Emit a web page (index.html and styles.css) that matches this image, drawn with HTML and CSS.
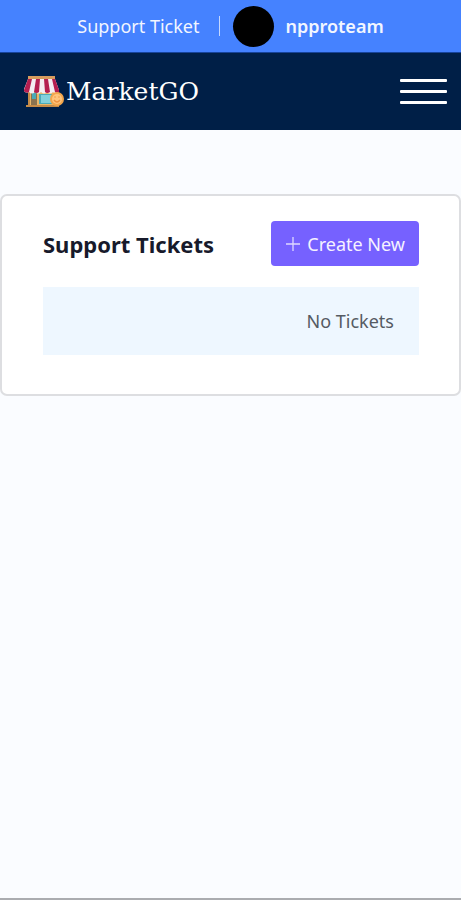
FILE: index.html
```html
<!DOCTYPE html>
<html lang="en">
<head>
<meta charset="utf-8">
<meta name="viewport" content="width=device-width, initial-scale=1">
<title>Support Tickets - MarketGO</title>
<link rel="stylesheet" href="styles.css">
</head>
<body>
<div class="topbar">
  <a class="topbar-link" href="#">Support Ticket</a>
  <span class="divider"></span>
  <a class="user" href="#"><span class="avatar"></span>npproteam</a>
</div>
<header class="navbar">
  <a class="brand" href="#">
    <svg class="brand-icon" viewBox="0 0 42 34" aria-hidden="true">
      <path fill="#e9b76c" d="M5 14h29v17H5z"/>
      <path fill="#c58b48" d="M3 30h33v2H3zM5 15h2v15H5z"/>
      <path fill="#8a7350" d="M8 17h6v13H8z"/>
      <path fill="#4baab8" d="M9 18h4v6H9zM16 19h13v10H16z"/>
      <path fill="#82d0dc" d="M18 20h10v8H18z"/>
      <path fill="#d79c5e" d="M5 1h27v3H5z"/>
      <path fill="#f4eef2" d="M5 4h27l4 11v2q-3 3-6 0-3 3-6 0-3 3-6 0-3 3-6 0-3 3-6 0-3 2-5-1v-2z"/>
      <path fill="#b51f50" d="M5 4h4L6 17q-3 2-5-1v-1zM13 4h4l-1 13q-2 2-5 0zM21 4h4l2 13q-3 2-5 0zM29 4h3l4 11v2q-2 2-4 0z"/>
      <circle cx="34" cy="24" r="7" fill="#f3a64c"/>
      <circle cx="34" cy="24" r="5" fill="#ffc57d"/>
      <path fill="none" stroke="#ed9240" stroke-width="1.3" d="M31 25q3 4 6 0M31.500 22h1M35.500 22h1"/>
    </svg>
    <span>MarketGO</span>
  </a>
  <button class="menu" type="button" aria-label="Menu"><span></span><span></span><span></span></button>
</header>
<main class="page">
  <section class="card">
    <div class="card-head">
      <h1>Support Tickets</h1>
      <button class="create" type="button">
        <svg class="plus" viewBox="0 0 14 14" aria-hidden="true"><path d="M7 0v14M0 7h14"/></svg>
        Create New
      </button>
    </div>
    <p class="empty">No Tickets</p>
  </section>
</main>
</body>
</html>
```

FILE: styles.css
```css
* {
  box-sizing: border-box;
}

body {
  display: flex;
  flex-direction: column;
  min-height: 100vh;
  margin: 0;
  border-bottom: 2px solid #aaacb0;
  background: #fafcff;
  font-family: "Noto Sans", sans-serif;
  font-size: 18px;
  line-height: 24px;
}

a {
  color: inherit;
  text-decoration: none;
}

button {
  border: 0;
  font: inherit;
  cursor: pointer;
}

.topbar {
  display: flex;
  align-items: center;
  justify-content: center;
  height: 53px;
  border-bottom: 1px solid #18449a;
  background: #4582ff;
  color: #f2f6ff;
}

.divider {
  width: 1px;
  height: 20px;
  margin: 0 13px 0 20px;
  background: #c5d8ff;
}

.user {
  display: flex;
  align-items: center;
  gap: 11px;
  font-weight: 600;
}

.avatar {
  width: 41px;
  height: 41px;
  border-radius: 50%;
  background: #000;
}

.navbar {
  display: flex;
  align-items: center;
  justify-content: space-between;
  height: 77px;
  padding: 0 14px 0 23px;
  background: #001f47;
}

.brand {
  display: flex;
  align-items: center;
  gap: 1px;
  color: #fff;
  font-family: "DejaVu Serif", serif;
  font-size: 25px;
}

.brand-icon {
  width: 42px;
  height: 34px;
}

.menu {
  display: flex;
  flex-direction: column;
  gap: 8px;
  width: 47px;
  padding: 0;
  background: none;
}

.menu span {
  height: 3px;
  border-radius: 1px;
  background: #fff;
}

.page {
  padding-top: 64px;
}

.card {
  padding: 25px 40px 39px 41px;
  border: 2px solid #dddee1;
  border-radius: 7px;
  background: #fff;
}

.card-head {
  display: flex;
  align-items: center;
  justify-content: space-between;
  margin-bottom: 21px;
}

h1 {
  margin: 0;
  color: #171a2b;
  font-size: 22px;
  font-weight: 700;
}

.create {
  display: flex;
  align-items: center;
  gap: 7px;
  height: 45px;
  padding: 0 14px 0 15px;
  border-radius: 4px;
  background: #7661ff;
  color: #f5f2ff;
}

.plus {
  width: 14px;
  height: 14px;
  fill: none;
  stroke: #ded8ff;
  stroke-width: 1.3;
}

.empty {
  margin: 0;
  padding: 22px 25px;
  background: #eef7ff;
  color: #555b63;
  text-align: right;
}
```
